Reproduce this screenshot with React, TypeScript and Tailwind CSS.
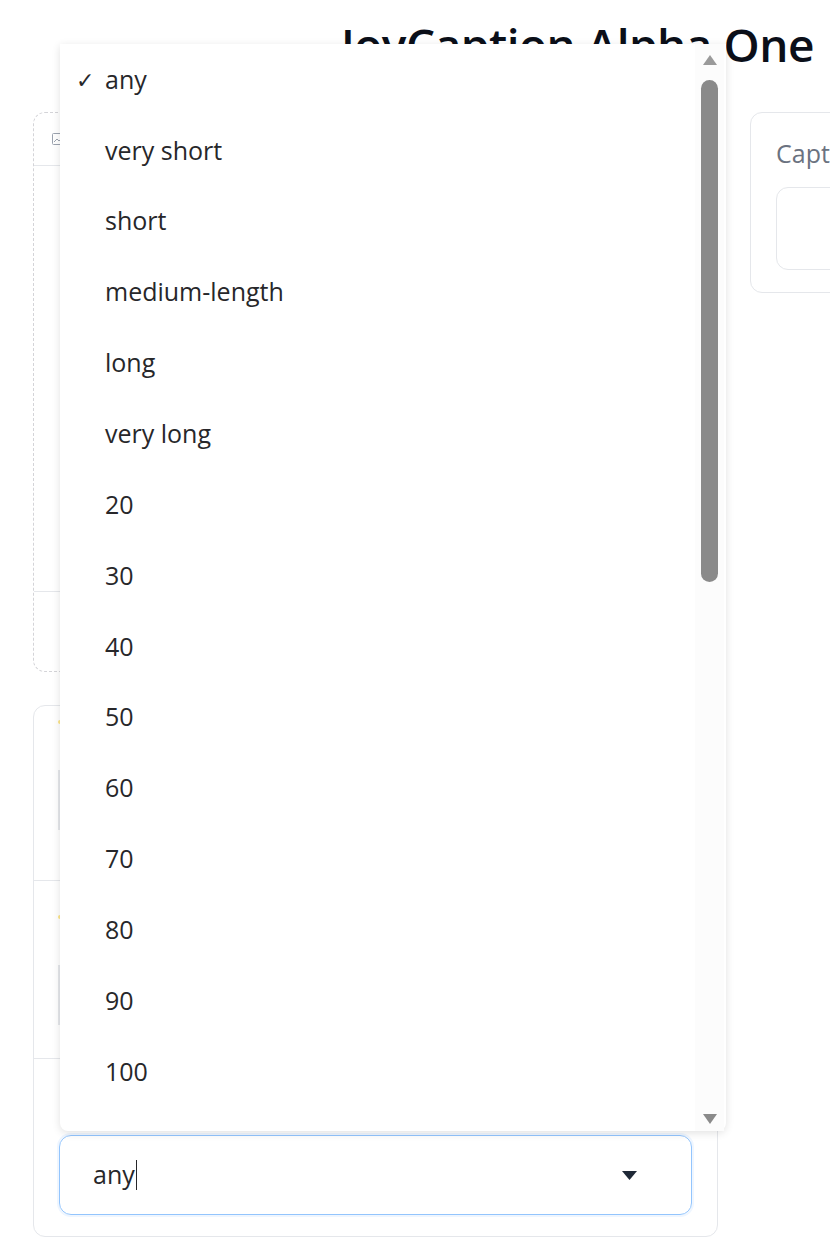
import { useState } from "react";

const options = [
  "any",
  "very short",
  "short",
  "medium-length",
  "long",
  "very long",
  "20",
  "30",
  "40",
  "50",
  "60",
  "70",
  "80",
  "90",
  "100",
];

export default function App() {
  const [value] = useState("any");

  return (
    <div className="relative w-[830px] h-[1254px] overflow-hidden bg-white text-[#27272a] font-['Open_Sans','Liberation_Sans',sans-serif]">
      {/* Title */}
      <h1 className="pl-[341px] pt-[16px] h-[112px] whitespace-nowrap text-[46px] font-semibold tracking-[-0.5px] leading-[56px] text-[#0b0f19]">
        JoyCaption Alpha One
      </h1>

      {/* Main row */}
      <div className="flex gap-[32px] pl-[33px]">
        {/* Left column */}
        <div className="w-[685px] shrink-0 flex flex-col gap-[33px]">
          {/* Image input */}
          <div className="h-[560px] rounded-xl border border-dashed border-[#d4d4d8] flex flex-col">
            <div className="h-[53px] border-b border-[#e5e7eb] flex items-center pl-[18px]">
              <svg width="12" height="12" viewBox="0 0 12 12" className="text-[#9ca3af]">
                <rect x="0.5" y="0.5" width="11" height="11" rx="1" fill="none" stroke="currentColor" />
                <path d="M2 9l3-3 2 2 3-3" fill="none" stroke="currentColor" />
              </svg>
            </div>
            <div className="flex-1" />
            <div className="h-[80px] border-t border-[#e5e7eb]" />
          </div>

          {/* Settings panel */}
          <div className="h-[532px] rounded-xl border border-[#e5e7eb] flex flex-col">
            <div className="h-[175px] border-b border-[#e5e7eb] pl-[24px] pt-[14px]">
              <div className="w-[4px] h-[4px] rounded-full bg-[#fde68a]" />
              <div className="mt-[46px] w-[2px] h-[60px] bg-[#e5e7eb]" />
            </div>
            <div className="h-[178px] border-b border-[#e5e7eb] pl-[24px] pt-[34px]">
              <div className="w-[4px] h-[4px] rounded-full bg-[#fde68a]" />
              <div className="mt-[46px] w-[2px] h-[60px] bg-[#e5e7eb]" />
            </div>
            <div className="flex-1 px-[25px] pt-[76px]">
              <div className="h-[80px] rounded-xl border border-[#93c5fd] shadow-[0_0_0_2px_#eff6ff] flex items-center pl-[33px] pr-[54px]">
                <span className="text-[25px]">{value}</span>
                <span className="w-[1.5px] h-[30px] bg-[#27272a] ml-[1px]" />
                <div className="flex-1" />
                <svg width="15" height="9" viewBox="0 0 15 9">
                  <path d="M0 0h15L7.5 9z" fill="#1f2937" />
                </svg>
              </div>
            </div>
          </div>
        </div>

        {/* Right column */}
        <div className="w-[400px] shrink-0">
          <div className="h-[181px] rounded-xl border border-[#e5e7eb] pl-[25px] pt-[22px]">
            <div className="text-[25px] text-[#6b7280] leading-[36px]">Caption</div>
            <div className="mt-[16px] h-[83px] rounded-xl border border-[#e5e7eb]" />
          </div>
        </div>
      </div>

      {/* Open dropdown list */}
      <div className="absolute left-[60px] top-[44px] w-[666px] h-[1087px] bg-white rounded-b-lg shadow-[0_2px_8px_rgba(0,0,0,0.12)] flex">
        <ul className="flex-1">
          {options.map((o) => (
            <li key={o} className="h-[70.86px] flex items-center text-[25px] whitespace-nowrap">
              <span className="w-[45px] pl-[16px] text-[22px]">{o === value ? "✓" : ""}</span>
              <span>{o}</span>
            </li>
          ))}
        </ul>
        {/* Scrollbar */}
        <div className="w-[29px] mr-[2px] bg-[#fcfcfc] flex flex-col items-center">
          <svg width="16" height="12" viewBox="0 0 16 12" className="mt-[10px]">
            <path d="M8 1L15 11H1z" fill="#9a9a9a" />
          </svg>
          <div className="mt-[14px] w-[17px] h-[502px] rounded-full bg-[#8a8a8a]" />
          <div className="flex-1" />
          <svg width="16" height="12" viewBox="0 0 16 12" className="mb-[6px]">
            <path d="M1 1H15L8 11z" fill="#8a8a8a" />
          </svg>
        </div>
      </div>
    </div>
  );
}
